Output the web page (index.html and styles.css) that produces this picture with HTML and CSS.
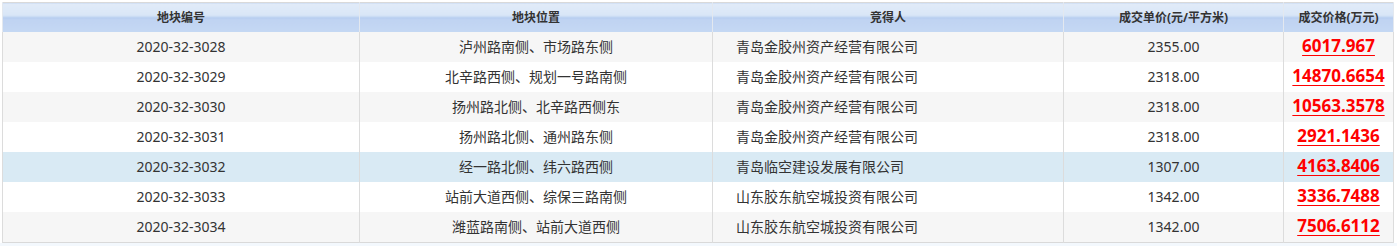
FILE: index.html
```html
<!DOCTYPE html>
<html lang="zh-CN">
<head>
<meta charset="utf-8">
<title>成交结果</title>
<link rel="stylesheet" href="styles.css">
</head>
<body>
<div class="wrap">
<table class="deals">
<colgroup>
<col class="c1"><col class="c2"><col class="c3"><col class="c4"><col class="c5">
</colgroup>
<thead>
<tr><th>地块编号</th><th>地块位置</th><th>竞得人</th><th>成交单价(元/平方米)</th><th>成交价格(万元)</th></tr>
</thead>
<tbody>
<tr class="alt"><td>2020-32-3028</td><td>泸州路南侧、市场路东侧</td><td class="left">青岛金胶州资产经营有限公司</td><td>2355.00</td><td><a class="price" href="#">6017.967</a></td></tr>
<tr><td>2020-32-3029</td><td>北辛路西侧、规划一号路南侧</td><td class="left">青岛金胶州资产经营有限公司</td><td>2318.00</td><td><a class="price" href="#">14870.6654</a></td></tr>
<tr class="alt"><td>2020-32-3030</td><td>扬州路北侧、北辛路西侧东</td><td class="left">青岛金胶州资产经营有限公司</td><td>2318.00</td><td><a class="price" href="#">10563.3578</a></td></tr>
<tr><td>2020-32-3031</td><td>扬州路北侧、通州路东侧</td><td class="left">青岛金胶州资产经营有限公司</td><td>2318.00</td><td><a class="price" href="#">2921.1436</a></td></tr>
<tr class="hover"><td>2020-32-3032</td><td>经一路北侧、纬六路西侧</td><td class="left">青岛临空建设发展有限公司</td><td>1307.00</td><td><a class="price" href="#">4163.8406</a></td></tr>
<tr><td>2020-32-3033</td><td>站前大道西侧、综保三路南侧</td><td class="left">山东胶东航空城投资有限公司</td><td>1342.00</td><td><a class="price" href="#">3336.7488</a></td></tr>
<tr class="alt"><td>2020-32-3034</td><td>潍蓝路南侧、站前大道西侧</td><td class="left">山东胶东航空城投资有限公司</td><td>1342.00</td><td><a class="price" href="#">7506.6112</a></td></tr>
</tbody>
</table>
</div>
</body>
</html>
```
FILE: styles.css
```css
html, body {
  margin: 0;
  padding: 0;
  background: #f3f8fd;
}
.wrap {
  background: #fff;
  padding: 2px 3px 0 2px;
}
.deals {
  border-collapse: collapse;
  table-layout: fixed;
  width: 1392px;
  font-family: "Noto Sans", "Noto Sans CJK SC", sans-serif;
  font-size: 14px;
  color: #333;
  border: 1px solid #d9d9d9;
}
.c1 { width: 357px; }
.c2 { width: 353px; }
.c3 { width: 351px; }
.c4 { width: 220px; }
.c5 { width: 110px; }
.deals th {
  height: 29px;
  padding: 0;
  font-size: 12px;
  font-weight: bold;
  color: #333;
  text-align: center;
  border-left: 1px solid #e3e8ef;
  border-right: 1px solid #e3e8ef;
  background: linear-gradient(to bottom, #e1ebf8 0%, #d9e6f7 40%, #c9dbf4 46%, #b3cbef 48%, #bfd3f2 55%, #c5d8f3 100%);
  line-height: 16px;
}
.deals td {
  height: 30px;
  padding: 0;
  text-align: center;
  line-height: 20px;
  border-left: 1px solid #dcdcdc;
  border-right: 1px solid #dcdcdc;
  background: #fff;
  white-space: nowrap;
  overflow: hidden;
}
.deals td.left {
  text-align: left;
  padding-left: 23px;
}
.deals tr.alt td { background: #f6f6f6; }
.deals tr.hover td { background: #d9eaf4; }
.price {
  color: #f00;
  font-weight: bold;
  font-size: 17px;
  line-height: 1;
  text-decoration: underline;
  text-underline-offset: 3px;
}
```
